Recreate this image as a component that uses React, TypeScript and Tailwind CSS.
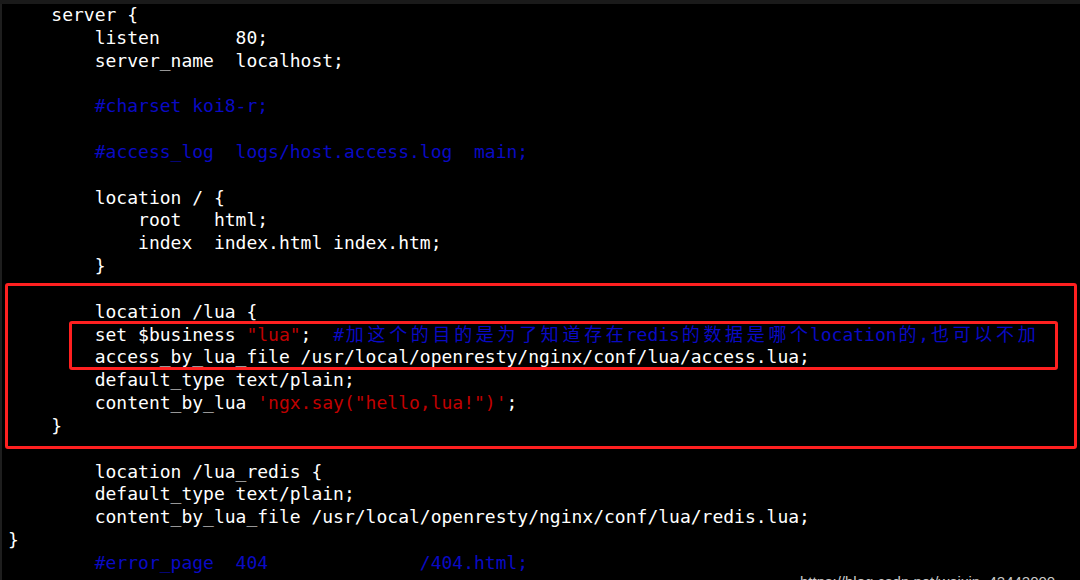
import React from 'react';

type Seg = { t: string; k?: 'c' | 's' };

const lines: Seg[][] = [
  [{ t: '    server {' }],
  [{ t: '        listen       80;' }],
  [{ t: '        server_name  localhost;' }],
  [],
  [{ t: '        ' }, { t: '#charset koi8-r;', k: 'c' }],
  [],
  [{ t: '        ' }, { t: '#access_log  logs/host.access.log  main;', k: 'c' }],
  [],
  [{ t: '        location / {' }],
  [{ t: '            root   html;' }],
  [{ t: '            index  index.html index.htm;' }],
  [{ t: '        }' }],
  [],
  [{ t: '        location /lua {' }],
  [
    { t: '        set $business ' },
    { t: '"lua"', k: 's' },
    { t: ';  ' },
    { t: '#加这个的目的是为了知道存在redis的数据是哪个location的,也可以不加', k: 'c' },
  ],
  [{ t: '        access_by_lua_file /usr/local/openresty/nginx/conf/lua/access.lua;' }],
  [{ t: '        default_type text/plain;' }],
  [{ t: '        content_by_lua ' }, { t: `'ngx.say("hello,lua!")'`, k: 's' }, { t: ';' }],
  [{ t: '    }' }],
  [],
  [{ t: '        location /lua_redis {' }],
  [{ t: '        default_type text/plain;' }],
  [{ t: '        content_by_lua_file /usr/local/openresty/nginx/conf/lua/redis.lua;' }],
  [{ t: '}' }],
  [{ t: '        ' }, { t: '#error_page  404              /404.html;', k: 'c' }],
];

// CJK glyphs take two terminal cells
const renderText = (text: string) => {
  const parts: React.ReactNode[] = [];
  let buf = '';
  Array.from(text).forEach((ch, i) => {
    if (/[\u4e00-\u9fff]/.test(ch)) {
      if (buf) parts.push(buf);
      buf = '';
      parts.push(
        <span key={i} className="inline-block w-[2ch] text-center">
          {ch}
        </span>
      );
    } else {
      buf += ch;
    }
  });
  if (buf) parts.push(buf);
  return parts;
};

const colorOf = (k?: 'c' | 's') => {
  if (k === 'c') return 'text-[#0a0ac4]';
  if (k === 's') return 'text-[#c00000]';
  return 'text-white';
};

const App = () => {
  return (
    <div className="relative w-[1080px] h-[580px] overflow-hidden bg-black">
      <div className="h-1 bg-[#1a1a1a]" />
      <div className="h-[576px] border-l-2 border-[#1e1e1e] pl-[6px]">
        <div className="font-['DejaVu_Sans_Mono','Noto_Sans_CJK_SC',monospace] text-[18px] leading-[22.83px] whitespace-pre">
          {lines.map((segs, i) => (
            <div key={i} className="h-[22.83px]">
              {segs.map((s, j) => (
                <span key={j} className={colorOf(s.k)}>
                  {renderText(s.t)}
                </span>
              ))}
            </div>
          ))}
        </div>
      </div>

      {/* red highlight boxes drawn over the terminal */}
      <div className="absolute left-[5px] top-[283px] w-[1072px] h-[166px] border-[3px] border-[#ff2020] rounded-[3px]" />
      <div className="absolute left-[69px] top-[321px] w-[989px] h-[49px] border-[3px] border-[#ff2020] rounded-[3px]" />

      {/* watermark, cut by the bottom edge as in the capture */}
      <div className="absolute left-[800px] top-[574px] font-['Liberation_Sans',sans-serif] text-[15px] leading-none text-[#c8c8c8] whitespace-nowrap">
        https://blog.csdn.net/weixin_42442000
      </div>
    </div>
  );
};

export default App;
